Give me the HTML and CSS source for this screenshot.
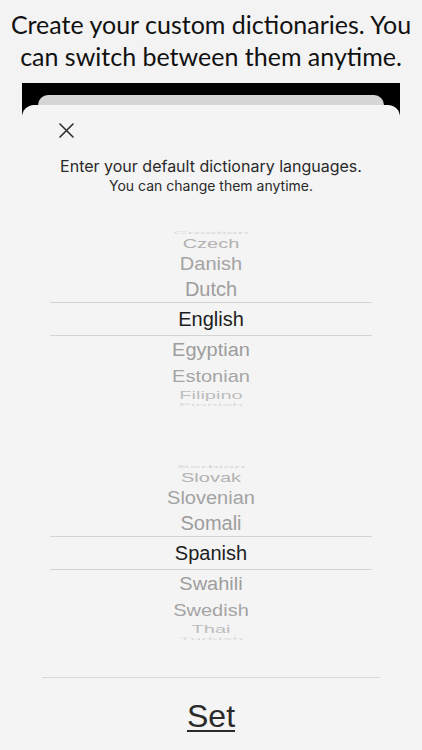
FILE: index.html
```html
<!DOCTYPE html>
<html lang="en">
<head>
<meta charset="utf-8">
<title>Dictionaries</title>
<link rel="stylesheet" href="styles.css">
</head>
<body>
<div class="page">
  <h1 class="headline">Create your custom dictionaries. You can switch between them anytime.</h1>
  <div class="device">
    <div class="backcard"></div>
    <div class="sheet">
      <div class="close">
        <svg width="15" height="15" viewBox="0 0 15 15"><path d="M1 1 L14 14 M14 1 L1 14" stroke="#2e2e2e" stroke-width="1.6" fill="none" stroke-linecap="round"/></svg>
      </div>
      <p class="intro">Enter your default dictionary languages.</p>
      <p class="intro-sub">You can change them anytime.</p>

      <div class="picker first">
        <div class="row d-4"><span>Croatian</span></div>
        <div class="row d-3"><span>Czech</span></div>
        <div class="row d-2"><span>Danish</span></div>
        <div class="row d-1"><span>Dutch</span></div>
        <div class="row sel"><span>English</span></div>
        <div class="row d1"><span>Egyptian</span></div>
        <div class="row d2"><span>Estonian</span></div>
        <div class="row d3"><span>Filipino</span></div>
        <div class="row d4"><span>Finnish</span></div>
      </div>

      <div class="picker second">
        <div class="row d-4"><span>Serbian</span></div>
        <div class="row d-3"><span>Slovak</span></div>
        <div class="row d-2"><span>Slovenian</span></div>
        <div class="row d-1"><span>Somali</span></div>
        <div class="row sel"><span>Spanish</span></div>
        <div class="row d1"><span>Swahili</span></div>
        <div class="row d2"><span>Swedish</span></div>
        <div class="row d3"><span>Thai</span></div>
        <div class="row d4"><span>Turkish</span></div>
      </div>

      <div class="divider"></div>
      <div class="set-wrap"><span class="set">Set</span></div>
    </div>
  </div>
</div>
</body>
</html>
```

FILE: styles.css
```css
html, body {
  margin: 0;
  padding: 0;
  background: #f3f3f3;
}
.page {
  width: 422px;
  height: 750px;
  overflow: hidden;
  display: flex;
  flex-direction: column;
}
.headline {
  margin: 8px 0 0;
  height: 75px;
  font-family: "Lato", "Liberation Sans", sans-serif;
  font-weight: 400;
  font-size: 25px;
  line-height: 32px;
  text-align: center;
  color: #111;
  padding: 0 4px;
}
.device {
  margin: 0 22px;
  background: #000;
  padding-top: 12px;
  flex: 1;
  display: flex;
  flex-direction: column;
}
.backcard {
  margin: 0 16px;
  height: 10px;
  background: #d6d6d6;
  border-radius: 11px 11px 0 0;
}
.sheet {
  flex: 1;
  background: #f4f4f4;
  border-radius: 12px 12px 0 0;
  display: flex;
  flex-direction: column;
  padding-top: 18px;
}
.close {
  margin-left: 37px;
  height: 15px;
  display: flex;
}
.intro {
  margin: 18px 0 0;
  font-family: "Inter", "Liberation Sans", sans-serif;
  font-size: 16px;
  line-height: 20px;
  height: 20px;
  text-align: center;
  color: #2a2a2a;
}
.intro-sub {
  margin: 0;
  font-family: "Inter", "Liberation Sans", sans-serif;
  font-size: 14px;
  line-height: 19px;
  height: 19px;
  text-align: center;
  color: #2a2a2a;
}
.picker {
  margin: 33px 28px 0;
  display: flex;
  flex-direction: column;
  font-family: "Liberation Sans", Arial, sans-serif;
  font-size: 20px;
}
.picker.second {
  margin-top: 53px;
}
.row {
  display: flex;
  align-items: center;
  justify-content: center;
  overflow: visible;
  line-height: 20px;
}
.row span {
  display: block;
  white-space: nowrap;
}
.row.sel {
  height: 32px;
  border-top: 1px solid #d4d4d4;
  border-bottom: 1px solid #d4d4d4;
  color: #1e1e1e;
}
.d-4 { height: 8px; color: #d6d6d6; }
.d-4 span { transform: scaleY(0.22); }
.d-3 { height: 15px; color: #b2b2b2; }
.d-3 span { transform: scaleY(0.62); }
.d-2 { height: 25px; color: #a3a3a3; }
.d-2 span { transform: scaleY(0.9); }
.d-1 { height: 26px; color: #9d9d9d; }
.d-1 span { transform: scaleY(0.97); }
.d1 { height: 26px; color: #9d9d9d; }
.d1 span { transform: scaleY(0.96); }
.d2 { height: 28px; color: #a4a4a4; }
.d2 span { transform: scaleY(0.84); }
.d3 { height: 10px; color: #bdbdbd; }
.d3 span { transform: scaleY(0.56); }
.d4 { height: 9px; color: #dadada; }
.d4 span { transform: scaleY(0.2); }
.divider {
  margin: 34px 20px 0;
  height: 1px;
  background: #d8d8d8;
}
.set-wrap {
  margin-top: 18px;
  display: flex;
  justify-content: center;
}
.set {
  font-family: "Liberation Sans", Arial, sans-serif;
  font-size: 32px;
  line-height: 40px;
  color: #2a2a2a;
  text-decoration: underline;
  text-decoration-thickness: 2px;
  text-underline-offset: 3px;
}
```
